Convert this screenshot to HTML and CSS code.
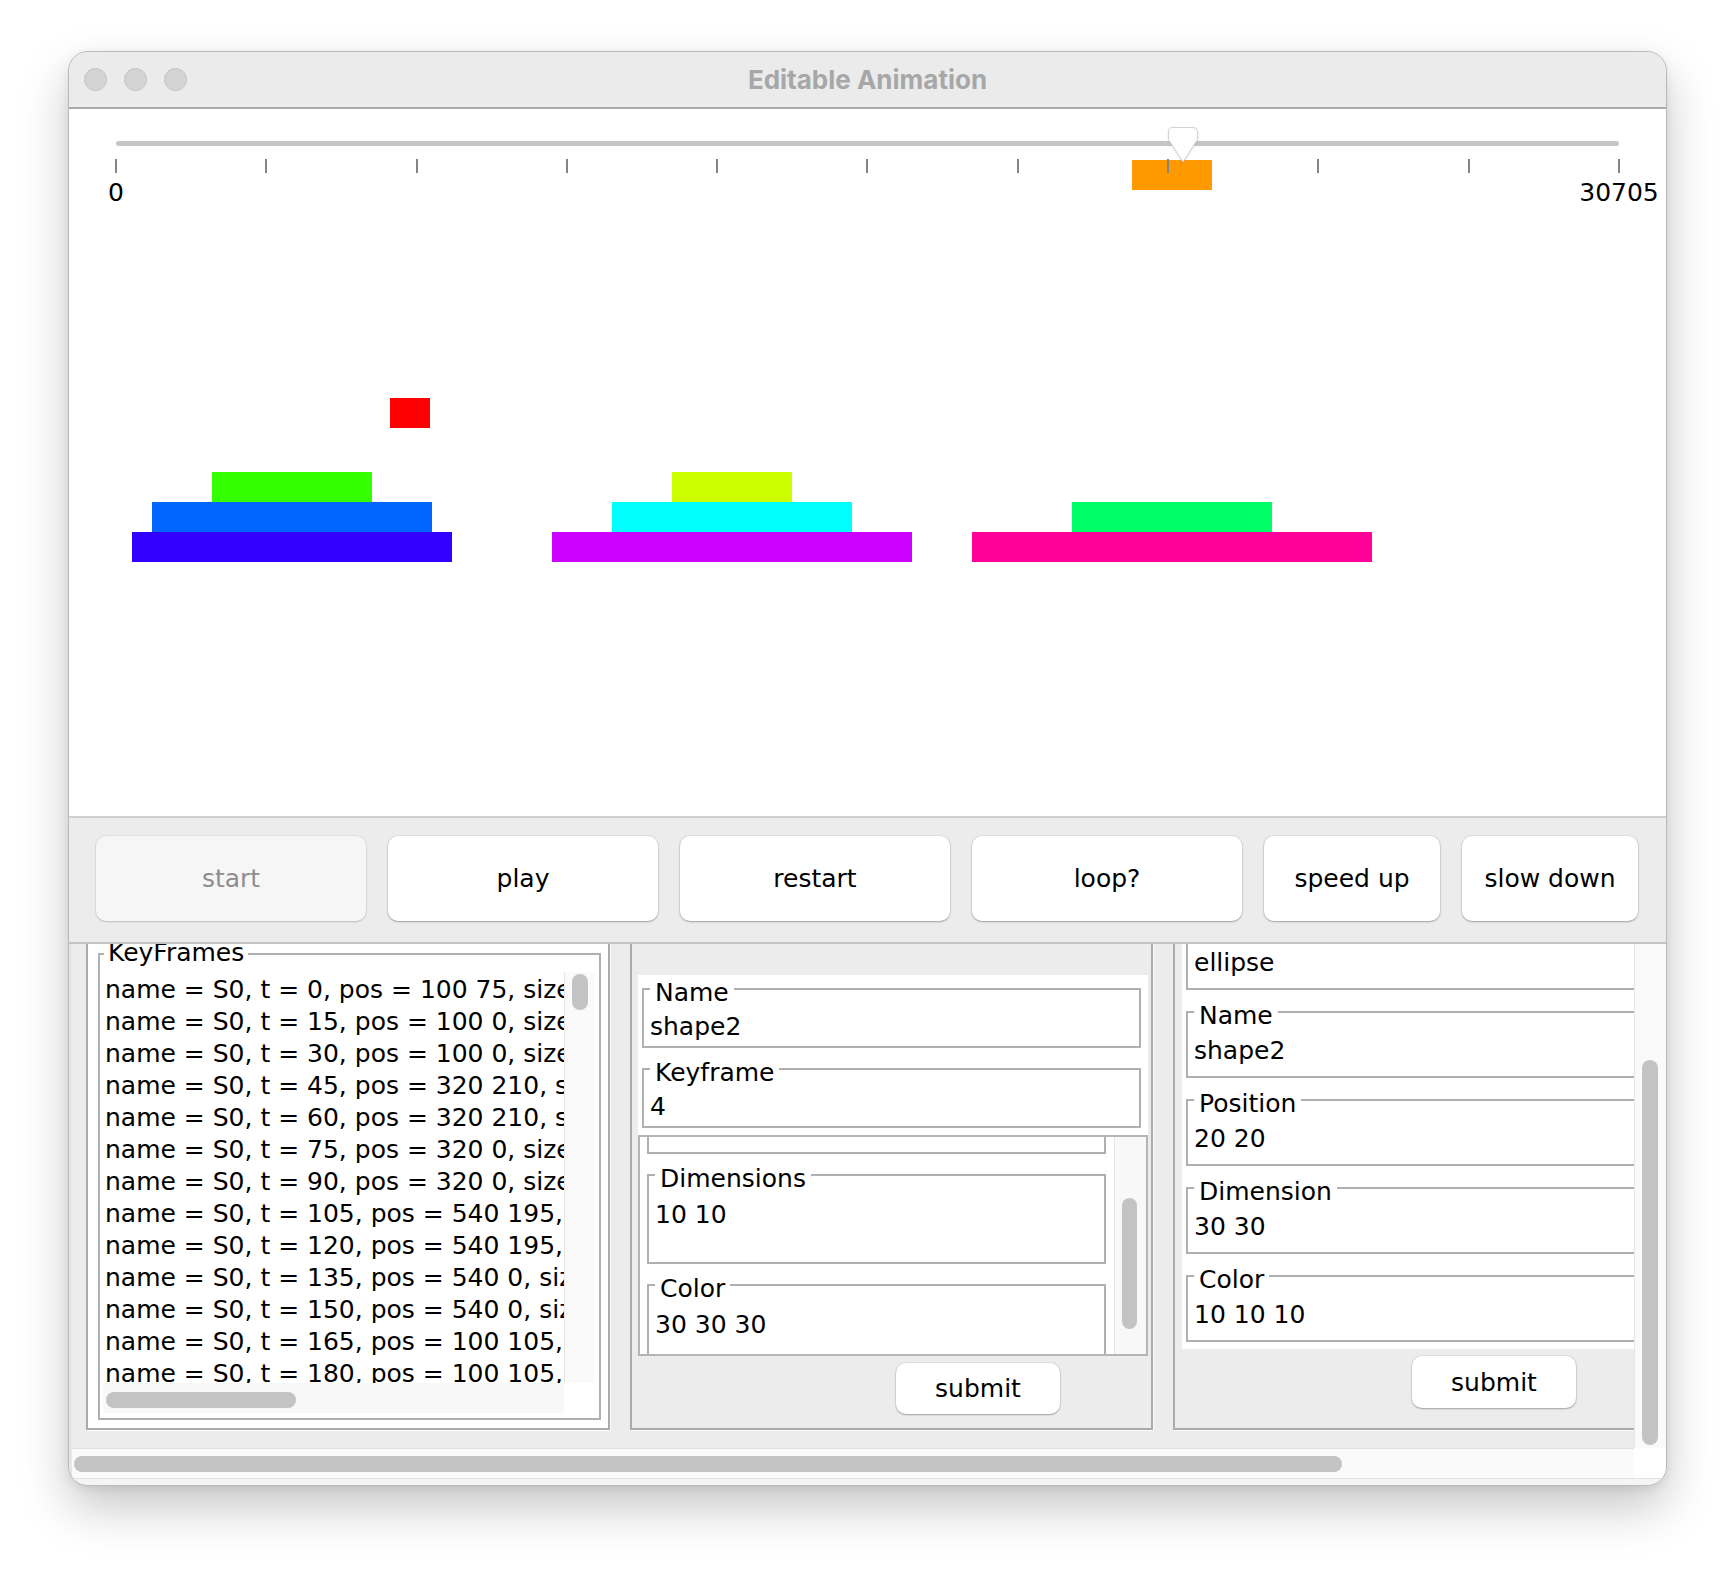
FILE: index.html
```html
<!DOCTYPE html>
<html lang="en">
<head>
<meta charset="utf-8">
<title>Editable Animation</title>
<link rel="stylesheet" href="styles.css">
</head>
<body>
<div class="window">
  <header class="titlebar">
    <div class="lights"><span class="light"></span><span class="light"></span><span class="light"></span></div>
    <div class="title">Editable Animation</div>
    <div></div>
  </header>

  <section class="canvas">
    <div class="shape" style="left:1063px;top:51px;width:80px;height:30px;background:#ff9900"></div>
    <div class="shape" style="left:321px;top:289px;width:40px;height:30px;background:#ff0000"></div>
    <div class="shape" style="left:143px;top:363px;width:160px;height:30px;background:#33ff00"></div>
    <div class="shape" style="left:83px;top:393px;width:280px;height:30px;background:#0066ff"></div>
    <div class="shape" style="left:63px;top:423px;width:320px;height:30px;background:#3300ff"></div>
    <div class="shape" style="left:603px;top:363px;width:120px;height:30px;background:#ccff00"></div>
    <div class="shape" style="left:543px;top:393px;width:240px;height:30px;background:#00ffff"></div>
    <div class="shape" style="left:483px;top:423px;width:360px;height:30px;background:#cc00ff"></div>
    <div class="shape" style="left:1003px;top:393px;width:200px;height:30px;background:#00ff66"></div>
    <div class="shape" style="left:903px;top:423px;width:400px;height:30px;background:#ff0099"></div>

    <div class="slider">
      <div class="track"></div>
      <div class="ticks">
        <span class="tick"></span><span class="tick"></span><span class="tick"></span><span class="tick"></span>
        <span class="tick"></span><span class="tick"></span><span class="tick"></span><span class="tick"></span>
        <span class="tick"></span><span class="tick"></span><span class="tick"></span>
      </div>
      <div class="labels"><span class="lbl">0</span><span class="lbl">30705</span></div>
      <svg class="thumb" width="32" height="38" viewBox="-1 -1 32 38"><path d="M4.5 0.5 H25.5 A4 4 0 0 1 29.5 4.5 V12.5 L15 35 L0.5 12.5 V4.5 A4 4 0 0 1 4.5 0.5 Z" fill="#ffffff" stroke="#d2d2d2" stroke-width="1"/></svg>
    </div>
  </section>

  <nav class="buttons">
    <button class="btn wide disabled">start</button>
    <button class="btn wide">play</button>
    <button class="btn wide">restart</button>
    <button class="btn wide">loop?</button>
    <button class="btn narrow">speed up</button>
    <button class="btn narrow">slow down</button>
  </nav>

  <section class="bottom">
    <div class="viewport">
      <div class="panels">
        <div class="panel panel-list">
          <div class="tbox kf">
            <span class="tlabel kf-label">KeyFrames</span>
            <div class="list-pane">
              <div class="list-view">
                <div class="row">name = S0, t = 0, pos = 100 75, size</div>
                <div class="row">name = S0, t = 15, pos = 100 0, size</div>
                <div class="row">name = S0, t = 30, pos = 100 0, size</div>
                <div class="row">name = S0, t = 45, pos = 320 210, s</div>
                <div class="row">name = S0, t = 60, pos = 320 210, s</div>
                <div class="row">name = S0, t = 75, pos = 320 0, size</div>
                <div class="row">name = S0, t = 90, pos = 320 0, size</div>
                <div class="row">name = S0, t = 105, pos = 540 195, s</div>
                <div class="row">name = S0, t = 120, pos = 540 195, s</div>
                <div class="row">name = S0, t = 135, pos = 540 0, size</div>
                <div class="row">name = S0, t = 150, pos = 540 0, size</div>
                <div class="row">name = S0, t = 165, pos = 100 105, s</div>
                <div class="row">name = S0, t = 180, pos = 100 105, s</div>
              </div>
              <div class="vbar"><span class="vthumb list-vthumb"></span></div>
              <div class="hbar"><span class="hthumb list-hthumb"></span></div>
              <div class="corner"></div>
            </div>
          </div>
        </div>

        <div class="panel panel-edit">
          <div class="form form-edit">
            <div class="tbox field short"><span class="tlabel">Name</span><div class="val">shape2</div></div>
            <div class="tbox field short"><span class="tlabel">Keyframe</span><div class="val">4</div></div>
            <div class="nested-pane">
              <div class="nested-view">
                <div class="nested-content">
                  <div class="tbox tall"></div>
                  <div class="tbox tall"><span class="tlabel">Dimensions</span><div class="val">10 10</div></div>
                  <div class="tbox tall"><span class="tlabel">Color</span><div class="val">30 30 30</div></div>
                </div>
              </div>
              <div class="vbar nested-bar"><span class="vthumb nested-vthumb"></span></div>
            </div>
          </div>
          <div class="actions actions-edit"><button class="btn submit">submit</button></div>
        </div>

        <div class="panel panel-shape">
          <div class="form form-shape">
            <div class="tbox field3"><div class="val">ellipse</div></div>
            <div class="tbox field3"><span class="tlabel">Name</span><div class="val">shape2</div></div>
            <div class="tbox field3"><span class="tlabel">Position</span><div class="val">20 20</div></div>
            <div class="tbox field3"><span class="tlabel">Dimension</span><div class="val">30 30</div></div>
            <div class="tbox field3"><span class="tlabel">Color</span><div class="val">10 10 10</div></div>
          </div>
          <div class="actions actions-shape"><button class="btn submit">submit</button></div>
        </div>
      </div>
    </div>
    <div class="vbar main-vbar"><span class="vthumb main-vthumb"></span></div>
    <div class="hbar main-hbar"><span class="hthumb main-hthumb"></span></div>
    <div class="corner"></div>
    <div class="footer"></div>
  </section>
</div>
</body>
</html>
```

FILE: styles.css
```css
* { box-sizing: border-box; }
html, body { margin: 0; padding: 0; }
body {
  width: 1736px;
  height: 1570px;
  overflow: hidden;
  background: #ffffff;
  padding: 51px 0 0 68px;
  font-family: "DejaVu Sans", "Liberation Sans", sans-serif;
  font-size: 25px;
  color: #000;
}

.window {
  width: 1599px;
  height: 1435px;
  border: 1px solid #b9b9b9;
  border-radius: 20px;
  overflow: hidden;
  display: flex;
  flex-direction: column;
  background: #ececec;
  box-shadow: 0 22px 48px rgba(0,0,0,0.22), 0 3px 10px rgba(0,0,0,0.08);
}

/* title bar */
.titlebar {
  flex: none;
  height: 57px;
  background: #ebebeb;
  border-bottom: 2px solid #ababab;
  display: grid;
  grid-template-columns: 1fr auto 1fr;
  align-items: center;
}
.lights { display: flex; gap: 17px; padding-left: 15px; }
.light {
  width: 23px; height: 23px; border-radius: 50%;
  background: #d4d4d4; border: 1px solid #c0c0c0;
}
.title {
  font-family: "Inter", "Liberation Sans", sans-serif;
  font-weight: 700;
  font-size: 26px;
  color: #a7a7a7;
  line-height: 1;
}

/* canvas */
.canvas {
  flex: none;
  height: 709px;
  position: relative;
  background: #ffffff;
  border-bottom: 2px solid #d0d0d0;
}
.shape { position: absolute; }

.slider {
  position: relative;
  width: 1551px;
  padding: 32px 0 0 46px;
}
.track {
  margin-left: 1px;
  width: 1503px;
  height: 5px;
  border-radius: 3px;
  background: #c6c6c6;
}
.ticks {
  margin-top: 13px;
  height: 14px;
  display: flex;
  justify-content: space-between;
}
.tick { width: 2px; background: #848484; }
.labels {
  margin-top: 7px;
  display: flex;
  justify-content: space-between;
  line-height: 26px;
}
.lbl { width: 2px; display: flex; justify-content: center; white-space: nowrap; }
.thumb {
  position: absolute;
  left: 1098px;
  top: 17px;
  filter: drop-shadow(0 1px 1px rgba(0,0,0,0.12));
}

/* buttons */
.buttons {
  flex: none;
  height: 126px;
  display: flex;
  gap: 22px;
  padding: 18px 27px 0;
  background: #ececec;
  border-bottom: 2px solid #c4c4c4;
}
.btn {
  font-family: "DejaVu Sans", "Liberation Sans", sans-serif;
  font-size: 25px;
  color: #000;
  background: #ffffff;
  border: none;
  border-radius: 10px;
  box-shadow: 0 0 0 1px rgba(0,0,0,0.05), 0 1px 2px rgba(0,0,0,0.28);
  padding: 0;
  height: 85px;
}
.wide { width: 270px; }
.narrow { width: 176px; }
.btn.disabled {
  background: #f6f6f6;
  color: #8e8e8e;
  box-shadow: 0 0 0 1px rgba(0,0,0,0.04), 0 1px 2px rgba(0,0,0,0.16);
}

/* bottom scroll pane */
.bottom {
  flex: 1;
  display: grid;
  grid-template-columns: 1562px 32px;
  grid-template-rows: 504px 30px 1fr;
  padding-left: 3px;
  background: #e6e6e6;
}
.viewport {
  overflow: hidden;
  display: flex;
  flex-direction: column;
  justify-content: flex-end;
  padding: 0 0 18px 14px;
  background: #ececec;
}
.panels {
  display: flex;
  gap: 20px;
  align-items: flex-end;
}
.panel {
  flex: none;
  border: 2px solid #ababab;
  box-shadow: 1px 1px 0 #fafafa;
}

.vbar { background: #fafafa; border-left: 1px solid #e6e6e6; }
.hbar { background: #fafafa; border-top: 1px solid #e2e2e2; }
.vthumb, .hthumb { display: block; background: #c3c3c3; border-radius: 8px; }
.corner { background: #ffffff; }
.footer {
  grid-column: 1 / -1;
  background: #f5f5f5;
  border-top: 1px solid #e2e2e2;
}
.main-vthumb { width: 16px; height: 385px; margin: 116px 0 0 7px; }
.main-hthumb { width: 1268px; height: 16px; margin: 7px 0 0 2px; }

/* titled boxes */
.tbox {
  position: relative;
  border: 2px solid #b0b0b0;
}
.tlabel {
  position: absolute;
  left: 6px;
  top: -10px;
  padding: 0 5px;
  line-height: 26px;
  background: #ffffff;
  white-space: nowrap;
}
.val {
  line-height: 32px;
  padding-left: 6px;
  white-space: nowrap;
}

/* panel 1 : keyframe list */
.panel-list {
  width: 524px;
  padding: 20px 7px 8px 10px;
  background: #ffffff;
}
.kf {
  width: 503px;
  height: 467px;
  padding: 17px 5px 5px 3px;
}
.kf-label { left: 4px; top: -15px; padding: 0 4px; }
.list-pane {
  display: grid;
  grid-template-columns: 461px 30px;
  grid-template-rows: 411px 30px;
}
.list-view {
  overflow: hidden;
  background: #ffffff;
  padding: 2px 0 0 2px;
}
.row { line-height: 32px; white-space: nowrap; }
.list-pane .hbar { background: #f8f8f8; border-top: none; }
.list-vthumb { width: 16px; height: 36px; margin: 2px 0 0 7px; }
.list-hthumb { width: 190px; height: 16px; margin: 9px 0 0 3px; }

/* panel 2 : keyframe editor */
.panel-edit {
  width: 523px;
  padding: 40px 3px 14px 6px;
  background: #ececec;
}
.form {
  background: #ffffff;
  display: flex;
  flex-direction: column;
}
.form-edit { padding-top: 13px; }
.field.short {
  height: 60px;
  margin: 0 7px 20px 4px;
  padding-top: 21px;
}
.field.short + .field.short { margin-bottom: 7px; }
.nested-pane {
  height: 221px;
  border: 2px solid #b5b5b5;
  display: grid;
  grid-template-columns: 474px 32px;
}
.nested-view { overflow: hidden; background: #ffffff; }
.nested-content {
  margin-top: -73px;
  padding: 0 8px 0 7px;
  display: flex;
  flex-direction: column;
  gap: 20px;
}
.tall { height: 90px; padding-top: 23px; }
.nested-bar { background: #f8f8f8; }
.nested-vthumb { width: 15px; height: 131px; margin: 61px 0 0 7px; }

.actions { padding-top: 7px; display: flex; }
.actions-edit { padding-left: 258px; }
.submit { width: 164px; height: 51px; }

/* panel 3 : shape editor */
.panel-shape {
  width: 560px;
  padding: 20px 0 20px 7px;
  background: #ececec;
}
.form-shape {
  padding: 13px 0 7px 4px;
  gap: 21px;
}
.field3 { height: 67px; padding-top: 22px; }
.actions-shape { padding-left: 230px; }
.actions-shape .submit { height: 52px; }
```
